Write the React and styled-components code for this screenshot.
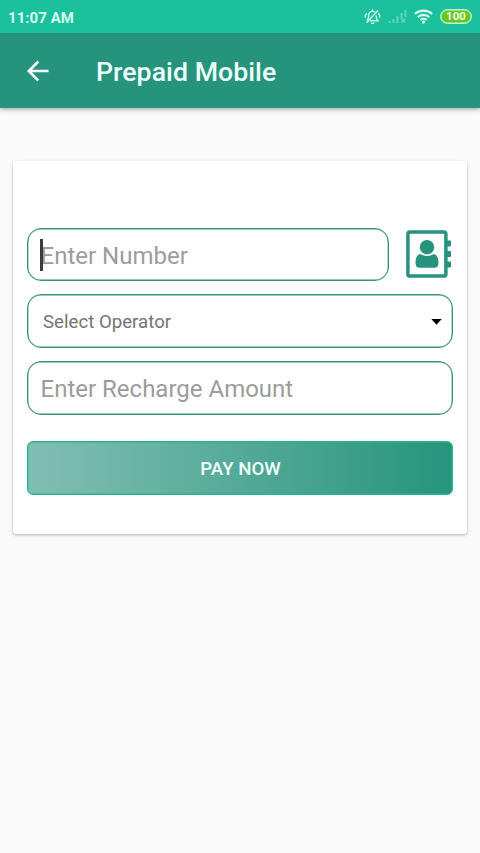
import React from "react";
import styled, { createGlobalStyle } from "styled-components";

const GlobalStyle = createGlobalStyle`
  * { box-sizing: border-box; }
  body {
    margin: 0;
    background: #fafafa;
    font-family: Roboto, "Liberation Sans", sans-serif;
  }
`;

const Screen = styled.div`
  display: flex;
  flex-direction: column;
  width: 480px;
  height: 853px;
  background: #fafafa;
  overflow: hidden;
`;

const StatusBar = styled.div`
  display: flex;
  align-items: center;
  justify-content: space-between;
  flex: none;
  height: 33px;
  padding: 0 8px;
  background: #1bc09c;
`;

const Clock = styled.span`
  color: #d5fbf2;
  font-size: 15px;
  font-weight: 700;
  line-height: 20px;
  letter-spacing: 0.05px;
  padding-top: 2px;
`;

const StatusIcons = styled.div`
  display: flex;
  align-items: center;
  gap: 7px;

  svg { display: block; }
`;

const Battery = styled.div`
  display: flex;
  align-items: center;
  justify-content: center;
  width: 32px;
  height: 15px;
  border: 1px solid #c4f6d8;
  border-radius: 8px;
  background: #66c626;
  box-shadow: inset 0 0 0 0.6px #c4f6d8;
  color: #f0ffe0;
  font-size: 11.5px;
  font-weight: 700;
  line-height: 13px;
`;

const Header = styled.header`
  display: flex;
  align-items: center;
  flex: none;
  height: 75px;
  padding-left: 26.5px;
  background: #26947c;
  box-shadow: 0 1px 5px rgba(0, 0, 0, 0.4);
  clip-path: inset(0 0 -10px 0);

  svg { display: block; flex: none; }
`;

const Title = styled.h1`
  margin: 0 0 0 47.5px;
  padding-top: 2px;
  color: #eefffb;
  font-size: 26.67px;
  font-weight: 500;
  line-height: 32px;
  letter-spacing: 0.05px;
  white-space: nowrap;
`;

const Card = styled.main`
  display: flex;
  flex-direction: column;
  flex: none;
  height: 373px;
  margin: 53px 13px 0;
  padding: 67px 14px 0;
  border-radius: 3px;
  background: #fff;
  box-shadow: 0 1px 3px rgba(0, 0, 0, 0.3);
`;

const NumberRow = styled.div`
  display: flex;
  align-items: center;
  gap: 17px;
  margin-bottom: 13px;

  svg { display: block; flex: none; margin-top: -1px; }
`;

const Field = styled.div`
  display: flex;
  align-items: center;
  flex: none;
  width: ${(p) => p.$width || "100%"};
  height: ${(p) => p.$height || "54px"};
  margin-bottom: ${(p) => p.$gap || "0"};
  padding: 0 10px 0 12px;
  border: 1px solid #35967f;
  border-radius: 14px;
  background: #fff;
  box-shadow: inset 0 0 0 0.4px #35967f;
`;

const Caret = styled.i`
  z-index: 1;
  width: 2.5px;
  height: 32px;
  margin-right: -2.5px;
  background: #383c3b;
`;

const Hint = styled.span`
  padding: ${(p) => p.$top || "1px"} 0 0 0.5px;
  color: #9c9c9c;
  font-size: 24px;
  line-height: 28px;
  white-space: nowrap;
`;

const SelectLabel = styled.span`
  flex: 1;
  padding: 2px 0 0 3px;
  color: #747474;
  font-size: 18.67px;
  line-height: 22px;
`;

const PayButton = styled.button`
  flex: none;
  height: 54px;
  margin: 0;
  padding: 1px 0 0 1px;
  border: 1px solid #24b594;
  border-radius: 6px;
  background: linear-gradient(90deg, #83bfb3, #26947c) border-box;
  box-shadow: inset 0 0 0 0.4px #24b594;
  color: #f0fffb;
  font-family: inherit;
  font-size: 18.67px;
  font-weight: 500;
`;

const ArrowSlot = styled.span`
  display: flex;
  padding-top: 2px;
`;

function BackIcon() {
  return (
    <svg width="22" height="22" viewBox="0 0 22 22" fill="none" stroke="#f0fffb" strokeWidth="2.6">
      <path d="M21.5 11H2M11.3 1.5L1.8 11l9.5 9.5" />
    </svg>
  );
}

function MutedBellIcon() {
  return (
    <svg width="17" height="17" viewBox="0 0 17 17" fill="none" stroke="#c0f4e7" strokeWidth="1.5">
      <path d="M5.700 12.700H14L12.400 10.500V7.500M11 4.200C8.200 2 4.600 3.900 4.600 7.200V9.800L2.800 12.600M7 15.200h3.400M8.500 1.200v2M2.900 5.200L1.300 7.200v2.500M14.100 5.200l1.600 2v2.500M2.600 14.800L14.200 2.200" />
    </svg>
  );
}

function SignalIcon() {
  return (
    <svg width="19" height="15" viewBox="0 0 19 15" fill="#62d5b9">
      <path d="M.5 12h2v2h-2zM4.500 10h2v4h-2zM8.500 7h2v7h-2zM12.500 4h2v5h-2zM16.500 1h2v7h-2z" />
      <path d="M13.300 9.500l4.200 4.200m0-4.200l-4.200 4.200" stroke="#62d5b9" strokeWidth="1.6" />
    </svg>
  );
}

function WifiIcon() {
  return (
    <svg width="19" height="15" viewBox="0 0 19 15" fill="none" stroke="#d5fbf2" strokeWidth="2.1">
      <path d="M.8 5c4.900-4.500 12.500-4.500 17.400 0M3.700 8.100c3.300-3 8.300-3 11.600 0M6.400 11c1.800-1.600 4.400-1.600 6.200 0" />
      <circle cx="9.500" cy="13.100" r="1.600" fill="#d5fbf2" stroke="none" />
    </svg>
  );
}

function ContactBookIcon() {
  return (
    <svg width="46" height="48" viewBox="0 0 46 48" fill="#26947c">
      <rect x="1.900" y="1.900" width="38" height="44.200" rx="2.200" fill="none" stroke="#26947c" strokeWidth="3.500" />
      <path d="M41 10.500h3.200q.8 0 .8.8v4.400q0 .8-.8.8H41zM41 21h3.200q.8 0 .8.8v4.400q0 .8-.8.8H41zM41 31.500h3.200q.8 0 .8.8v4.400q0 .8-.8.8H41z" />
      <circle cx="21" cy="17.200" r="7.200" />
      <path d="M14 24c4.300 2.600 9.700 2.600 14 0 3 .8 4.500 4.300 4.500 9.200 0 3-1.600 4.500-4 4.500h-15c-2.400 0-4-1.500-4-4.500 0-4.900 1.500-8.400 4.500-9.200z" />
    </svg>
  );
}

function DropArrow() {
  return (
    <svg width="11" height="6" viewBox="0 0 11 6">
      <path d="M.3 0h10.400L5.500 5.700z" fill="#000" />
    </svg>
  );
}

export default function App() {
  return (
    <>
      <GlobalStyle />
      <Screen>
        <StatusBar>
          <Clock>11:07 AM</Clock>
          <StatusIcons>
            <MutedBellIcon />
            <SignalIcon />
            <WifiIcon />
            <Battery>100</Battery>
          </StatusIcons>
        </StatusBar>
        <Header>
          <BackIcon />
          <Title>Prepaid Mobile</Title>
        </Header>
        <Card>
          <NumberRow>
            <Field $width="362px" $height="53px">
              <Caret />
              <Hint $top="2px">Enter Number</Hint>
            </Field>
            <ContactBookIcon />
          </NumberRow>
          <Field $gap="13px">
            <SelectLabel>Select Operator</SelectLabel>
            <ArrowSlot>
              <DropArrow />
            </ArrowSlot>
          </Field>
          <Field $gap="26px">
            <Hint>Enter Recharge Amount</Hint>
          </Field>
          <PayButton>PAY NOW</PayButton>
        </Card>
      </Screen>
    </>
  );
}
